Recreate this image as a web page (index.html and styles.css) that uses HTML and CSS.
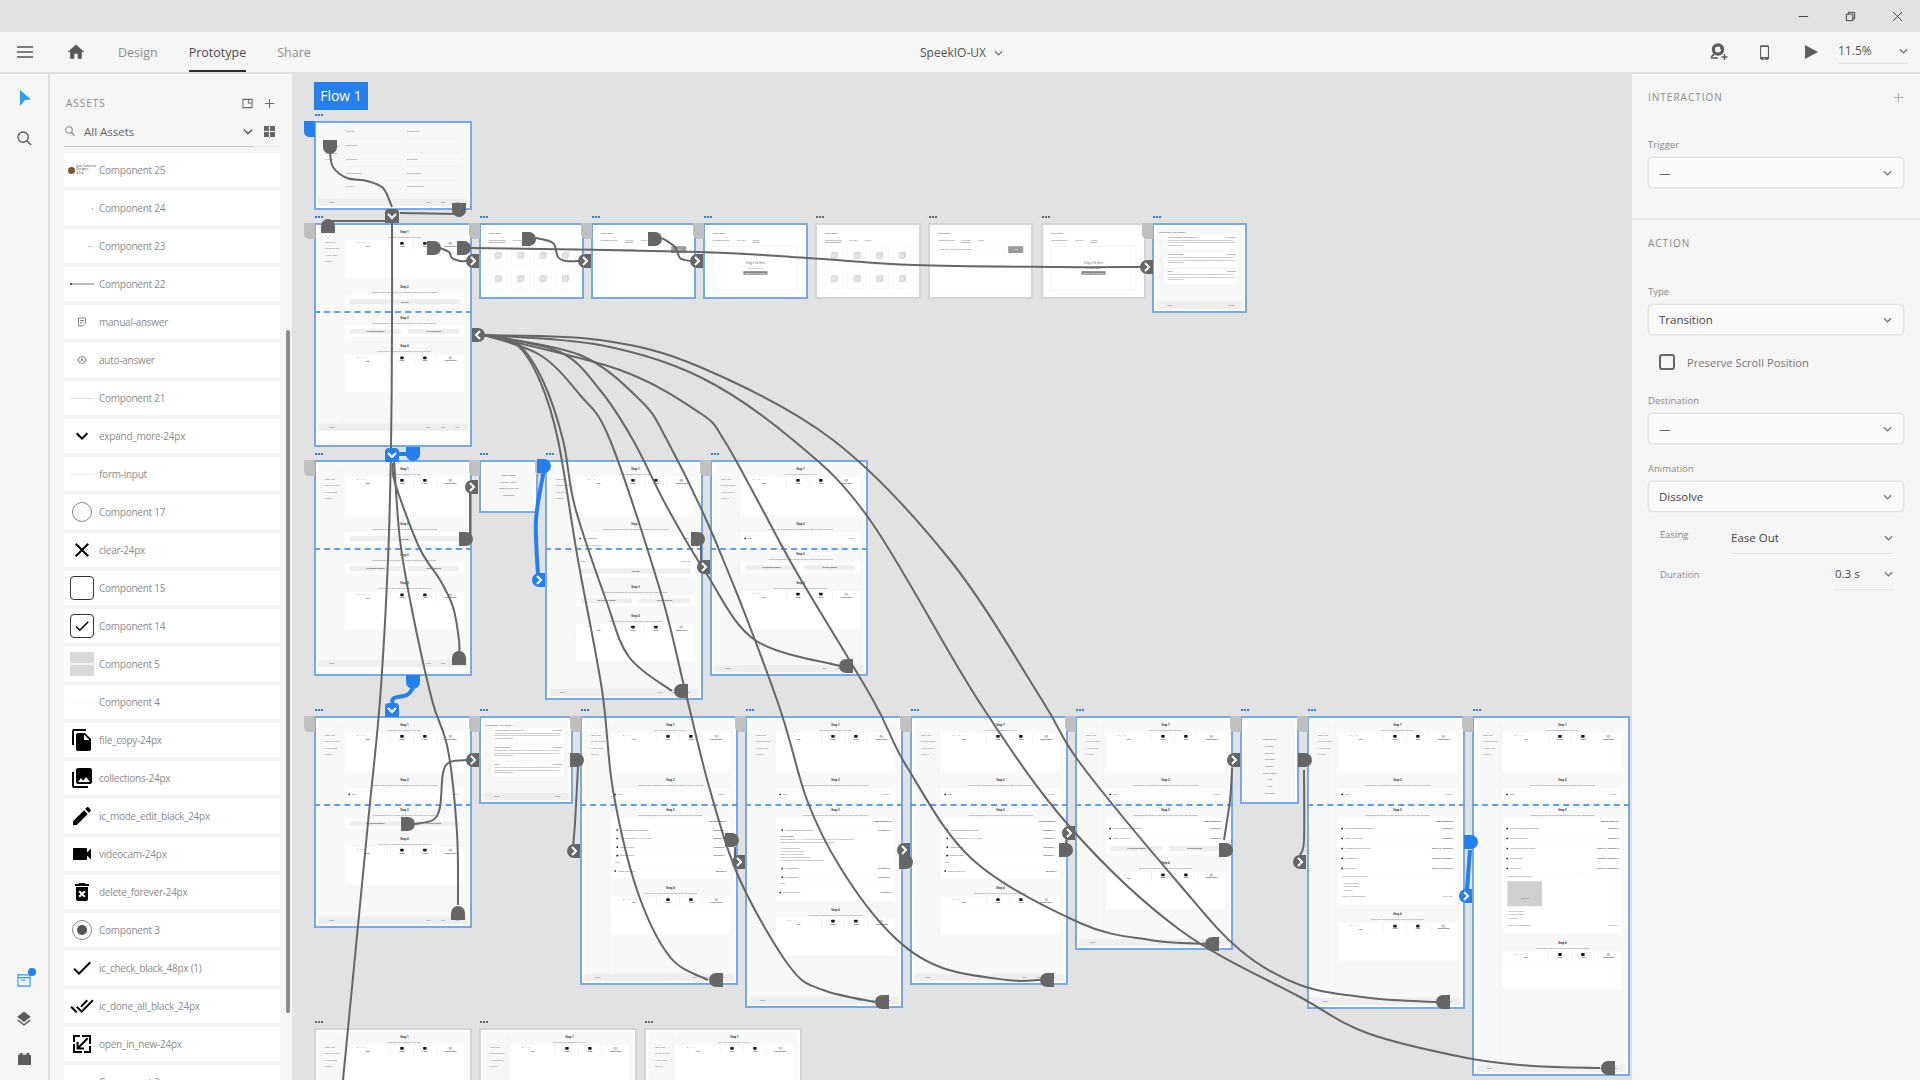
FILE: index.html
```html
<!DOCTYPE html>
<html lang="en">
<head>
    <meta charset="UTF-8">
    <title>SpeekIO-UX</title>
    <link rel="stylesheet" href="styles.css">
</head>
<body>
    <div class="titlebar">
        <svg class="win-ico" viewBox="0 0 12 12"><path d="M1 6h10"/></svg>
        <svg class="win-ico" viewBox="0 0 12 12"><path d="M1.5 3.5h7v7h-7zM3.5 3.5v-2h7v7h-2"/></svg>
        <svg class="win-ico" viewBox="0 0 12 12"><path d="M1 1l10 10M11 1L1 11"/></svg>
    </div>

    <div class="topbar">
        <svg class="burger" viewBox="0 0 16 12"><path d="M0 1h16M0 6h16M0 11h16"/></svg>
        <svg class="home" viewBox="0 0 24 24"><path d="M10 20v-6h4v6h5v-8h3L12 3 2 12h3v8z"/></svg>
        <div class="tabs">
            <div class="tab">Design</div>
            <div class="tab active">Prototype</div>
            <div class="tab">Share</div>
        </div>
        <div class="doc-title">SpeekIO-UX <svg class="chev" viewBox="0 0 10 6"><path d="M1 1l4 4 4-4"/></svg></div>
        <div class="top-right">
            <svg class="top-ico user" viewBox="0 0 18 18"><circle cx="8" cy="6.500" r="4.600"/><path d="M4.500 11.500C2.500 12 1.500 13.500 1.500 15h6.500M8 2c2 0 3.500 2 3 4.500"/><path d="M14.500 11v6M11.500 14h6"/></svg>
            <svg class="top-ico phone" viewBox="0 0 10 16"><path d="M1.500 0h7A1.500 1.500 0 0 1 10 1.500v13A1.500 1.500 0 0 1 8.500 16h-7A1.500 1.500 0 0 1 0 14.500v-13A1.500 1.500 0 0 1 1.500 0zM1.200 2v11h7.600V2zM5 13.700a.8.8 0 1 0 0 1.600.8.8 0 0 0 0-1.600z" fill-rule="evenodd"/></svg>
            <svg class="top-ico play" viewBox="0 0 13 14"><path d="M0 0l13 7-13 7z"/></svg>
            <div class="zoom-box">11.5% <svg class="chev" viewBox="0 0 10 6"><path d="M1 1l4 4 4-4"/></svg></div>
        </div>
    </div>

    <div class="main">
        <div class="rail">
            <svg class="rail-ico arrow" viewBox="0 0 11 16"><path d="M0 0l11 9.500-6 .5-5 6z"/></svg>
            <svg class="rail-ico search" viewBox="0 0 16 16"><circle cx="6.500" cy="6.500" r="5.500"/><path d="M10.500 10.500L15 15"/></svg>
            <div class="rail-bottom">
                <div class="doc-ico">
                    <svg viewBox="0 0 16 15"><path d="M1 2h13v12H1zM1 5h13M4 7.500h5"/></svg>
                    <span class="doc-dot"></span>
                </div>
                <svg class="rail-ico layers" viewBox="0 0 24 24"><path d="M11.990 18.540l-7.370-5.730L3 14.070l9 7 9-7-1.630-1.270-7.380 5.740zM12 16l7.360-5.730L21 9l-9-7-9 7 1.630 1.270L12 16z"/></svg>
                <svg class="rail-ico plugin" viewBox="0 0 16 14"><path d="M1 3h2V1h3v2h4V1h3v2h2v11H1z"/></svg>
            </div>
        </div>

        <div class="assets">
            <div class="assets-head">
                <span class="panel-title">ASSETS</span>
                <svg class="head-ico" viewBox="0 0 12 12"><path d="M1 1.500h10v9H1zM7 1.500v4h4"/></svg>
                <svg class="head-ico plus-ico" viewBox="0 0 12 12"><path d="M6 1v10M1 6h10"/></svg>
            </div>
            <div class="assets-search">
                <svg class="mag" viewBox="0 0 10 10"><circle cx="4" cy="4" r="3.200"/><path d="M6.500 6.500L9.500 9.500"/></svg>
                <span class="search-text">All Assets</span>
                <svg class="search-chev" viewBox="0 0 12 8"><path d="M1 1.500l5 5 5-5"/></svg>
                <svg class="grid-ico" viewBox="0 0 11 11"><path d="M0 0h5v5H0zM6 0h5v5H6zM0 6h5v5H0zM6 6h5v5H6z"/></svg>
            </div>
            <div class="asset-list">
                <div class="asset"><div class="thumb"><span class="mini-face"></span><span class="mini-text">Jane Cameron<br>Designer<br>4.9 ★</span></div>Component 25</div>
                <div class="asset"><div class="thumb right"><span class="speck"></span></div>Component 24</div>
                <div class="asset"><div class="thumb right"><span class="speck wide"></span></div>Component 23</div>
                <div class="asset"><div class="thumb"><span class="rule thick"></span></div>Component 22</div>
                <div class="asset"><div class="thumb"><svg class="small-ico" viewBox="0 0 10 10"><path d="M1.500 1h7v5l-3 3h-4zM3 3.500h4M3 5.500h2.500"/></svg></div>manual-answer</div>
                <div class="asset"><div class="thumb"><svg class="small-ico" viewBox="0 0 10 10"><circle cx="5" cy="5" r="3.500"/><path d="M3.800 6.500L5 3.500l1.200 3M0 5h1M9 5h1"/></svg></div>auto-answer</div>
                <div class="asset"><div class="thumb"><span class="rule"></span></div>Component 21</div>
                <div class="asset"><div class="thumb"><svg class="mat" viewBox="0 0 24 24"><path d="M16.590 8.590L12 13.170 7.410 8.590 6 10l6 6 6-6z"/></svg></div>expand_more-24px</div>
                <div class="asset"><div class="thumb"><span class="rule faint"></span></div>form-input</div>
                <div class="asset"><div class="thumb"><span class="ring"></span></div>Component 17</div>
                <div class="asset"><div class="thumb"><svg class="mat" viewBox="0 0 24 24"><path d="M19 6.410L17.590 5 12 10.590 6.410 5 5 6.410 10.590 12 5 17.590 6.410 19 12 13.410 17.590 19 19 17.590 13.410 12z"/></svg></div>clear-24px</div>
                <div class="asset"><div class="thumb"><span class="check-box"></span></div>Component 15</div>
                <div class="asset"><div class="thumb"><span class="check-box"><svg class="mat tick" viewBox="0 0 24 24"><path d="M9 16.170L4.830 12l-1.420 1.410L9 19 21 7l-1.410-1.410z"/></svg></span></div>Component 14</div>
                <div class="asset"><div class="thumb"><span class="gray-card"></span></div>Component 5</div>
                <div class="asset"><div class="thumb"><span class="rule ghost"></span></div>Component 4</div>
                <div class="asset"><div class="thumb"><svg class="mat" viewBox="0 0 24 24"><path d="M16 1H4c-1.100 0-2 .9-2 2v14h2V3h12V1zm-1 4l6 6v10c0 1.100-.9 2-2 2H7.990C6.890 23 6 22.100 6 21l.01-14c0-1.100.89-2 1.990-2h7zm-1 7h5.500L14 6.500V12z"/></svg></div>file_copy-24px</div>
                <div class="asset"><div class="thumb"><svg class="mat" viewBox="0 0 24 24"><path d="M22 16V4c0-1.100-.9-2-2-2H8c-1.100 0-2 .9-2 2v12c0 1.100.9 2 2 2h12c1.100 0 2-.9 2-2zm-11-4l2.030 2.710L16 11l4 5H8l3-4zM2 6v14c0 1.100.9 2 2 2h14v-2H4V6H2z"/></svg></div>collections-24px</div>
                <div class="asset"><div class="thumb"><svg class="mat" viewBox="0 0 24 24"><path d="M3 17.250V21h3.750L17.810 9.940l-3.750-3.750L3 17.250zM20.710 7.040c.39-.39.39-1.020 0-1.410l-2.340-2.340c-.39-.39-1.020-.39-1.410 0l-1.830 1.830 3.750 3.750 1.830-1.830z"/></svg></div>ic_mode_edit_black_24px</div>
                <div class="asset"><div class="thumb"><svg class="mat" viewBox="0 0 24 24"><path d="M17 10.500V7c0-.55-.45-1-1-1H4c-.55 0-1 .45-1 1v10c0 .55.45 1 1 1h12c.55 0 1-.45 1-1v-3.500l4 4v-11l-4 4z"/></svg></div>videocam-24px</div>
                <div class="asset"><div class="thumb"><svg class="mat" viewBox="0 0 24 24"><path d="M6 19c0 1.100.9 2 2 2h8c1.100 0 2-.9 2-2V7H6v12zm2.460-7.120l1.410-1.410L12 12.590l2.120-2.120 1.410 1.410L13.410 14l2.120 2.120-1.410 1.410L12 15.410l-2.120 2.120-1.410-1.410L10.590 14l-2.130-2.120zM15.500 4l-1-1h-5l-1 1H5v2h14V4z"/></svg></div>delete_forever-24px</div>
                <div class="asset"><div class="thumb"><span class="ring"><span class="ring-dot"></span></span></div>Component 3</div>
                <div class="asset"><div class="thumb"><svg class="mat" viewBox="0 0 24 24"><path d="M9 16.170L4.830 12l-1.420 1.410L9 19 21 7l-1.410-1.410z"/></svg></div>ic_check_black_48px (1)</div>
                <div class="asset"><div class="thumb"><svg class="mat" viewBox="0 0 24 24"><path d="M18 7l-1.410-1.410-6.340 6.340 1.410 1.410L18 7zm4.240-1.410L11.660 16.170 7.480 12l-1.410 1.410L11.660 19l12-12-1.420-1.410zM.41 13.410L6 19l1.410-1.410L1.830 12 .41 13.410z"/></svg></div>ic_done_all_black_24px</div>
                <div class="asset"><div class="thumb"><svg class="mat" viewBox="0 0 24 24"><path d="M21 3v9h-2V5h-7V3zM3 21v-9h2v7h7v2zM3 3h7v2H5v5H3zM21 21h-7v-2h5v-5h2zM17 5.600l1.400 1.400-8.400 8.400H14v2H6.600v-7.400h2v4.100z"/></svg></div>open_in_new-24px</div>
                <div class="asset"><div class="thumb"></div>Component 2</div>
            </div>
            <div class="scroll-thumb"></div>
        </div>

        <div class="canvas" id="canvas">
            <div class="flow-chip">Flow 1</div>
        </div>

        <div class="props">
            <div class="prop-section first">
                <div class="prop-head"><span class="panel-title">INTERACTION</span><svg class="head-ico faint" viewBox="0 0 12 12"><path d="M6 1v10M1 6h10"/></svg></div>
                <label class="field-label">Trigger</label>
                <div class="select muted">—<svg class="chev" viewBox="0 0 10 6"><path d="M1 1l4 4 4-4"/></svg></div>
            </div>
            <div class="prop-section">
                <div class="prop-head"><span class="panel-title">ACTION</span></div>
                <label class="field-label type">Type</label>
                <div class="select">Transition<svg class="chev" viewBox="0 0 10 6"><path d="M1 1l4 4 4-4"/></svg></div>
                <div class="check-row"><span class="check"></span>Preserve Scroll Position</div>
                <label class="field-label dest">Destination</label>
                <div class="select muted">—<svg class="chev" viewBox="0 0 10 6"><path d="M1 1l4 4 4-4"/></svg></div>
                <label class="field-label anim">Animation</label>
                <div class="select">Dissolve<svg class="chev" viewBox="0 0 10 6"><path d="M1 1l4 4 4-4"/></svg></div>
                <div class="inline-row">
                    <span class="inline-label">Easing</span>
                    <div class="inline-value">Ease Out<svg class="chev" viewBox="0 0 10 6"><path d="M1 1l4 4 4-4"/></svg></div>
                </div>
                <div class="inline-row second">
                    <span class="inline-label">Duration</span>
                    <div class="inline-value short">0.3 s<svg class="chev" viewBox="0 0 10 6"><path d="M1 1l4 4 4-4"/></svg></div>
                </div>
            </div>
        </div>
    </div>
    <script src="canvas.js"></script>
</body>
</html>
```

FILE: styles.css
```css
* {
    margin: 0;
    padding: 0;
    box-sizing: border-box;
}
body {
    width: 1920px;
    height: 1080px;
    overflow: hidden;
    background-color: #e2e2e2;
    font-family: "Open Sans", "Noto Sans", sans-serif;
    color: #555;
    display: flex;
    flex-direction: column;
}

/* window title bar */
.titlebar {
    height: 32px;
    background-color: #e2e2e2;
    display: flex;
    justify-content: flex-end;
    align-items: center;
    gap: 36px;
    padding-right: 17px;
}
.win-ico {
    width: 11px;
    height: 11px;
    fill: none;
    stroke: #333;
    stroke-width: 1;
}

/* app bar */
.topbar {
    height: 42px;
    background-color: #f5f5f5;
    border-bottom: 2px solid #e0e0e0;
    display: flex;
    align-items: center;
    position: relative;
}
.burger {
    width: 16px;
    height: 12px;
    margin-left: 17px;
    fill: none;
    stroke: #555;
    stroke-width: 1.6;
}
.home {
    width: 20px;
    height: 20px;
    margin-left: 33px;
    fill: #595959;
}
.tabs {
    display: flex;
    gap: 31px;
    margin-left: 32px;
    height: 40px;
}
.tab {
    font-size: 12.5px;
    line-height: 41px;
    color: #8e8e8e;
}
.tab.active {
    color: #4b4b4b;
    border-bottom: 2px solid #2c2c2c;
}
.doc-title {
    position: absolute;
    left: 920px;
    top: 0;
    line-height: 41px;
    font-size: 12px;
    color: #555;
}
.chev {
    width: 9px;
    height: 6px;
    fill: none;
    stroke: #777;
    stroke-width: 1.4;
}
.doc-title .chev {
    margin-left: 5px;
    vertical-align: 1px;
}
.top-right {
    margin-left: auto;
    display: flex;
    align-items: center;
    height: 40px;
    padding-right: 12px;
}
.top-ico {
    width: 17px;
    height: 16px;
    fill: #5c5c5c;
}
.top-ico.user {
    width: 18px;
    height: 18px;
    fill: none;
    stroke: #5c5c5c;
    stroke-width: 1.5;
}
.top-ico.user circle {
    stroke-width: 3.2;
}
.top-ico.phone {
    width: 9px;
    margin-left: 32px;
    height: 15px;
}
.top-ico.play {
    width: 13px;
    height: 14px;
    margin-left: 36px;
}
.zoom-box {
    width: 70px;
    margin-left: 20px;
    height: 23px;
    border-bottom: 1px solid #e0e0e0;
    font-size: 12px;
    line-height: 18px;
    display: flex;
    justify-content: space-between;
    align-items: center;
    padding-bottom: 2px;
}

.main {
    flex: 1;
    display: flex;
    min-height: 0;
}

/* tools rail */
.rail {
    width: 50px;
    background-color: #f5f5f5;
    border-right: 2px solid #e0e0e0;
    display: flex;
    flex-direction: column;
    align-items: center;
    padding-top: 16px;
}
.rail-ico {
    display: block;
}
.rail-ico.arrow {
    width: 11px;
    height: 16px;
    fill: #2d9bf0;
    margin-left: 2px;
}
.rail-ico.search {
    width: 15px;
    height: 15px;
    margin-top: 25px;
    fill: none;
    stroke: #5c5c5c;
    stroke-width: 1.5;
}
.rail-bottom {
    margin-top: auto;
    padding-bottom: 15px;
    display: flex;
    flex-direction: column;
    align-items: center;
}
.doc-ico {
    width: 15px;
    height: 14px;
    position: relative;
}
.doc-ico svg {
    display: block;
    width: 15px;
    height: 14px;
    fill: none;
    stroke: #2d9bf0;
    stroke-width: 1.2;
}
.doc-dot {
    position: absolute;
    right: -4px;
    top: -5px;
    width: 8px;
    height: 8px;
    border-radius: 50%;
    background-color: #2680eb;
}
.rail-ico.layers {
    width: 18px;
    height: 18px;
    margin-top: 23px;
    fill: #5c5c5c;
}
.rail-ico.plugin {
    width: 15px;
    height: 13px;
    margin-top: 24px;
    fill: #5c5c5c;
}

/* assets panel */
.assets {
    width: 242px;
    background-color: #f5f5f5;
    padding: 0 12px 0 14px;
    position: relative;
    overflow: hidden;
}
.panel-title {
    font-size: 10px;
    letter-spacing: 1px;
    color: #8a8a8a;
}
.assets-head {
    height: 30px;
    margin-top: 14px;
    padding-left: 2px;
    display: flex;
    align-items: center;
}
.head-ico {
    width: 11px;
    height: 11px;
    fill: none;
    stroke: #6a6a6a;
    stroke-width: 1.1;
    margin-left: 11px;
}
.assets-head .head-ico:nth-child(2) {
    margin-left: auto;
}
.assets-head .plus-ico {
    margin-right: 5px;
    stroke: #6a6a6a;
}
.head-ico.faint {
    stroke: #aaa;
    margin-left: auto;
    margin-right: -1px;
}
.assets-search {
    height: 28px;
    margin-top: 1px;
    border-bottom: 1px solid #e8e8e8;
    display: flex;
    align-items: center;
    padding: 0 5px 3px 1px;
    position: relative;
}
.assets-search::after {
    content: "";
    position: absolute;
    left: 0;
    bottom: -1px;
    width: 189px;
    height: 1px;
    background-color: #c4c4c4;
}
.mag {
    width: 10px;
    height: 10px;
    fill: none;
    stroke: #888;
    stroke-width: 1.1;
}
.search-text {
    font-size: 11.5px;
    color: #666;
    margin-left: 9px;
}
.search-chev {
    width: 10px;
    height: 7px;
    margin-left: auto;
    fill: none;
    stroke: #555;
    stroke-width: 1.6;
}
.grid-ico {
    width: 11px;
    height: 11px;
    margin-left: 11px;
    fill: #666;
}
.asset-list {
    margin-top: 6px;
    display: flex;
    flex-direction: column;
    gap: 4px;
}
.asset {
    height: 34px;
    background-color: #fff;
    border-radius: 2px;
    display: flex;
    align-items: center;
    padding-left: 6px;
    font-size: 10px;
    letter-spacing: -.25px;
    color: #8b8b8b;
    flex-shrink: 0;
}
.thumb {
    width: 24px;
    height: 24px;
    margin-right: 5px;
    display: flex;
    align-items: center;
    justify-content: center;
    position: relative;
}
.thumb.right {
    justify-content: flex-end;
}
.mat {
    width: 24px;
    height: 24px;
    fill: #000;
}
.small-ico {
    width: 10px;
    height: 10px;
    fill: none;
    stroke: #666;
    stroke-width: .8;
}
.mini-face {
    width: 7px;
    height: 7px;
    border-radius: 50%;
    background-color: #7d5232;
    flex-shrink: 0;
}
.mini-text {
    font-size: 3px;
    line-height: 3.4px;
    letter-spacing: 0;
    color: #333;
    margin-left: 1px;
    white-space: nowrap;
}
.speck {
    width: 1px;
    height: 1px;
    background-color: #999;
    margin-right: 1px;
}
.speck.wide {
    width: 5px;
    background-color: #ccc;
}
.rule {
    width: 24px;
    height: 1px;
    background-color: #ddd;
}
.rule.thick {
    height: 2px;
    background-color: #bbb;
    border-left: 2px solid #555;
}
.rule.faint {
    background-color: #eee;
}
.rule.ghost {
    background-color: #f6f6f6;
}
.ring {
    width: 20px;
    height: 20px;
    border: 1px solid #888;
    border-radius: 50%;
    display: flex;
    align-items: center;
    justify-content: center;
}
.ring-dot {
    width: 10px;
    height: 10px;
    border-radius: 50%;
    background-color: #555;
}
.check-box {
    width: 24px;
    height: 24px;
    border: 1px solid #333;
    border-radius: 4px;
    display: flex;
    align-items: center;
    justify-content: center;
}
.tick {
    width: 18px;
    height: 18px;
}
.gray-card {
    width: 24px;
    height: 24px;
    background: linear-gradient(#d9d9d9 11px, #f2f2f2 11px, #f2f2f2 13px, #d9d9d9 13px);
}
.scroll-thumb {
    position: absolute;
    left: 236px;
    top: 256px;
    width: 4px;
    height: 683px;
    border-radius: 2px;
    background-color: #8c8c8c;
}

/* canvas */
.canvas {
    width: 1340px;
    position: relative;
    overflow: hidden;
    background-color: #e2e2e2;
}
.flow-chip {
    position: absolute;
    left: 22px;
    top: 8px;
    width: 54px;
    height: 28px;
    background-color: #2680eb;
    color: #fff;
    font-size: 14px;
    line-height: 28px;
    text-align: center;
}
.wires {
    position: absolute;
    left: 0;
    top: 0;
    width: 1340px;
    height: 1006px;
}
.wire {
    fill: none;
    stroke: #666;
    stroke-width: 2;
}
.wire.blue {
    stroke: #2680eb;
    stroke-width: 4;
}
.knob {
    fill: #666;
}
.knob.blue {
    fill: #2680eb;
}
.knob-arrow {
    fill: none;
    stroke: #fff;
    stroke-width: 2;
}

/* artboards, drawn at full size and scaled down by .page */
.board {
    position: absolute;
    background-color: #fff;
    border: 2px solid #74a9ec;
}
.board.idle {
    border-color: #d4d4d4;
}
.board-dots {
    position: absolute;
    left: -1px;
    top: -9px;
    display: flex;
    gap: 1px;
}
.board-dots i {
    width: 2px;
    height: 2px;
    background-color: #2680eb;
}
.board.idle .board-dots i {
    background-color: #666;
}
.board-tab {
    position: absolute;
    left: -12px;
    top: -2px;
    width: 11px;
    height: 16px;
    background-color: #bfbfbf;
    border-radius: 0 0 0 5px;
}
.board-tab.blue {
    background-color: #2680eb;
}
.fold {
    position: absolute;
    left: -2px;
    right: -2px;
    height: 0;
    border-top: 2px dashed #5a9ff0;
}
.page {
    transform-origin: 0 0;
    transform: scale(.1157);
    overflow: hidden;
    background-color: #fff;
    padding: 20px;
    display: flex;
    flex-direction: column;
    font-size: 14px;
    color: #555;
}
.page-body {
    flex: 1;
    display: flex;
    min-height: 0;
    background-color: #f8f8f8;
    overflow: hidden;
}
.side-nav {
    width: 210px;
    border-right: 3px solid #efefef;
    padding: 118px 0 0 50px;
    flex-shrink: 0;
    font-size: 18px;
    color: #666;
}
.side-nav p {
    height: 52px;
}
.side-nav p:nth-child(2) {
    height: 60px;
}
.steps {
    flex: 1;
    padding: 23px 32px 0 20px;
    min-width: 0;
}
.step {
    margin-bottom: 66px;
}
.step h4 {
    font-size: 24px;
    line-height: 30px;
    text-align: center;
    color: #333;
}
.step .sub {
    font-size: 16px;
    line-height: 30px;
    height: 41px;
    margin-top: 16px;
    text-align: center;
    color: #666;
    white-space: nowrap;
}
.tools {
    display: flex;
    gap: 6px;
    height: 80px;
    background-color: #eee;
    font-size: 14px;
    color: #333;
    text-align: center;
}
.cell {
    flex: 196;
    background-color: #fff;
    padding-top: 16px;
    line-height: 16px;
    font-weight: 700;
}
.cell.wide {
    flex: 398;
    letter-spacing: 8px;
    font-weight: 400;
    white-space: nowrap;
    overflow: hidden;
}
.cell.wide .lbl {
    letter-spacing: 0;
    font-weight: 700;
    margin-top: 16px;
}
.cell.last {
    flex: 240;
}
.ico {
    display: block;
    width: 30px;
    height: 24px;
    margin: 0 auto 5px;
    background-color: #1a1a1a;
    border-radius: 4px;
}
.ico.pale {
    opacity: .25;
}
.edit-box {
    height: 245px;
    background-color: #fff;
}
.box {
    background-color: #fff;
    padding: 14px 12px;
    border-radius: 4px;
}
.bar {
    height: 46px;
    margin: 19px 26px;
    background-color: #eee;
    text-align: center;
    line-height: 46px;
    font-size: 15px;
    font-weight: 700;
    color: #444;
}
.btns {
    display: flex;
    justify-content: space-around;
    padding: 12px 0;
}
.btns div {
    width: 440px;
    height: 42px;
    line-height: 42px;
    background-color: #eee;
    text-align: center;
    font-size: 14px;
    font-weight: 700;
    color: #444;
}
.answer {
    height: 50px;
    margin: 14px 0;
    display: flex;
    align-items: center;
    gap: 14px;
    border: 2px solid #f2f2f2;
    padding: 0 16px;
    font-size: 14px;
    color: #333;
}
.answer .right {
    margin-left: auto;
}
.bullet {
    width: 14px;
    height: 14px;
    border-radius: 3px;
    background-color: #222;
    flex-shrink: 0;
}
.total {
    text-align: right;
    font-size: 15px;
    font-weight: 700;
    color: #333;
    padding: 4px 20px 18px 0;
}
.q-row {
    height: 66px;
    margin-bottom: 20px;
    border: 2px solid #f4f4f4;
    display: flex;
    align-items: center;
    gap: 14px;
    padding: 0 16px;
    font-size: 14px;
    color: #444;
    white-space: nowrap;
}
.q-row .right {
    margin-left: auto;
    font-weight: 700;
}
.q-group {
    border: 2px solid #f4f4f4;
    padding: 10px 16px;
    margin-bottom: 20px;
    font-size: 13px;
    color: #555;
    line-height: 26px;
}
.q-group p {
    white-space: nowrap;
    overflow: hidden;
}
.q-group .q-row {
    margin-bottom: 8px;
}
.q-form {
    border: 2px solid #f4f4f4;
    margin: -20px 0 20px;
    padding: 20px 24px;
    font-size: 14px;
    line-height: 30px;
    color: #555;
}
.q-form .q-input {
    width: 620px;
    border-bottom: 2px solid #eee;
    margin-bottom: 24px;
}
.q-foot {
    display: flex;
    justify-content: space-between;
    margin-top: 30px;
}
.image-drop {
    width: 300px;
    height: 216px;
    background-color: #cfcfcf;
    margin-bottom: 30px;
    text-align: center;
    padding-top: 130px;
    font-size: 14px;
}
.page-foot {
    height: 64px;
    background-color: #eee;
    display: flex;
    align-items: center;
    padding: 0 70px 0 90px;
    gap: 90px;
    font-size: 16px;
    color: #555;
    flex-shrink: 0;
}
.page-foot span:first-child {
    margin-right: auto;
}

.form-wrap {
    flex: 1;
    padding: 44px 60px 0 30px;
    display: grid;
    grid-template-columns: 1fr 1fr;
    column-gap: 60px;
    align-content: start;
    font-size: 15px;
}
.form-field {
    height: 119px;
}
.form-field p {
    height: 74px;
    border-bottom: 2px solid #e4e4e4;
}

.lib {
    flex: 1;
    background-color: #fff;
    padding: 38px 44px;
    display: flex;
    flex-direction: column;
    border: 3px solid #f2f2f2;
    font-size: 17px;
}
.lib h5 {
    font-size: 18px;
    font-weight: 400;
    color: #333;
    margin-bottom: 34px;
}
.lib-tabs {
    display: flex;
    gap: 64px;
    color: #555;
    margin-bottom: 30px;
}
.lib-tabs span {
    padding-bottom: 6px;
    border-bottom: 5px solid transparent;
}
.lib-tabs .on {
    border-bottom-color: #888;
}
.tile-grid {
    display: grid;
    grid-template-columns: repeat(4, 1fr);
    gap: 36px;
}
.tile {
    height: 166px;
    border: 4px solid #f0f0f0;
    border-radius: 12px;
    display: flex;
    align-items: center;
    justify-content: center;
}
.tile i {
    width: 50px;
    height: 50px;
    background-color: #e4e4e4;
    border: 4px solid #ccc;
    box-shadow: 10px -10px 0 #ddd;
}
.link-row {
    display: flex;
    gap: 34px;
}
.link-row div {
    flex: 1;
    background-color: #fff;
    border: 2px solid #eee;
    height: 60px;
    line-height: 56px;
    padding-left: 10px;
}
.link-row b {
    width: 130px;
    height: 60px;
    line-height: 60px;
    background-color: #999;
    color: #fff;
    text-align: center;
}
.drop {
    flex: 1;
    border: 3px dashed #cfcfcf;
    text-align: center;
    padding-top: 130px;
    background-color: #fff;
}
.drop .big {
    font-size: 22px;
    margin-bottom: 18px;
}
.drop b {
    display: inline-block;
    margin-top: 12px;
    padding: 4px 14px;
    background-color: #888;
    color: #fff;
    font-weight: 400;
}

.options {
    flex: 1;
    background-color: #f8f8f8;
    border: 3px solid #f2f2f2;
    text-align: center;
    font-size: 17px;
    padding-top: 80px;
    color: #444;
}
.options p {
    height: 58px;
}
.options.dense {
    padding-top: 150px;
}

.cat-body {
    flex: 1;
    background-color: #f8f8f8;
    padding: 30px 40px 0 22px;
    font-size: 14px;
    min-height: 0;
}
.cat-body h5 {
    font-size: 17px;
    font-weight: 400;
    color: #333;
    margin-bottom: 12px;
}
.cat {
    display: flex;
    gap: 30px;
    align-items: center;
    margin-bottom: 20px;
}
.cat > i {
    width: 24px;
    height: 24px;
    border: 3px solid #ddd;
    flex-shrink: 0;
    border-radius: 4px;
}
.cat div {
    flex: 1;
    background-color: #fff;
    padding: 14px 20px;
    min-height: 128px;
    line-height: 20px;
    font-size: 12px;
    color: #666;
}
.cat h6 {
    display: flex;
    justify-content: space-between;
    font-size: 14px;
    font-weight: 400;
    color: #333;
    margin-bottom: 6px;
}
.page-foot.two {
    gap: 0;
    justify-content: space-between;
}

/* properties panel */
.props {
    width: 288px;
    background-color: #f5f5f5;
}
.prop-section {
    padding: 15px 16px 0 16px;
    border-top: 2px solid #e4e4e4;
}
.prop-section.first {
    border-top: 0;
    height: 144px;
}
.prop-head {
    height: 16px;
    display: flex;
    align-items: center;
    justify-content: space-between;
    padding-right: 1px;
}
.field-label {
    display: block;
    font-size: 9.5px;
    color: #8a8a8a;
    margin-top: 32px;
    height: 15px;
    line-height: 15px;
}
.field-label.type {
    margin-top: 33px;
}
.field-label.dest {
    margin-top: 23px;
}
.field-label.anim {
    margin-top: 17px;
}
.select {
    height: 31px;
    margin-top: 5px;
    background-color: #fafafa;
    border: 1px solid #e2e2e2;
    box-shadow: 0 0 0 .5px #e8e8e8;
    border-radius: 4px;
    padding: 0 10px;
    display: flex;
    align-items: center;
    justify-content: space-between;
    font-size: 11.5px;
    color: #444;
}
.select.muted {
    color: #666;
}
.select .chev {
    margin-right: 1px;
}
.check-row {
    display: flex;
    align-items: center;
    margin: 19px 0 0 11px;
    height: 16px;
    font-size: 11.2px;
    color: #777;
}
.check {
    width: 16px;
    height: 16px;
    border: 2px solid #666;
    border-radius: 3px;
    margin-right: 12px;
}
.inline-row {
    margin-top: 12px;
    padding-left: 12px;
    height: 30px;
    display: flex;
    justify-content: space-between;
    font-size: 9.5px;
    color: #8a8a8a;
    line-height: 22px;
}
.inline-row.second {
    margin-top: 6px;
    line-height: 30px;
}
.inline-value {
    width: 162px;
    border-bottom: 1px solid #e2e2e2;
    display: flex;
    justify-content: space-between;
    align-items: center;
    font-size: 11.5px;
    color: #444;
    height: 30px;
    padding-bottom: 2px;
    margin-right: 11px;
}
.inline-value.short {
    width: 58px;
}
```

FILE: canvas.js
```js
// artboards and prototype wires on the canvas, all coordinates are screen px
var S = 0.1157;
var OX = 292;
var OY = 74;
var canvas = document.getElementById('canvas');

function nav() {
    return '<div class="side-nav"><p>• Basic Info</p><p>• Screen Builder</p><p>• Hiring Team</p><p>• Finalize</p></div>';
}
function foot() {
    return '<div class="page-foot"><span>Cancel</span><span>Save</span><span>Back</span><span>Next</span></div>';
}
function step(n, sub, body) {
    return '<div class="step"><h4>Step ' + n + '</h4><p class="sub">' + sub + '</p>' + body + '</div>';
}
function editor() {
    return '<div class="tools"><div class="cell wide">B I U ≡ ≡ ≡ ≡<p class="lbl">Text</p></div>' +
        '<div class="cell"><i class="ico"></i>Photo</div><div class="cell"><i class="ico"></i>Video</div>' +
        '<div class="cell last"><i class="ico pale"></i>Upload Setting</div></div><div class="edit-box"></div>';
}
function bar() {
    return '<div class="box"><div class="bar">Add Item</div></div>';
}
function btns() {
    return '<div class="box"><div class="btns"><div>Add Question Category</div><div>Add New Question</div></div></div>';
}
function answer() {
    return '<div class="box"><div class="answer"><span class="bullet"></span>Video<span class="right">⏱ 5 min</span><span>⤢</span></div></div>';
}
function answerForm() {
    return '<div class="box"><div class="answer"><span class="bullet"></span>Video Answer Type<span class="right">⏱ 5 min</span><span>⤢</span></div>' +
        '<div class="q-form"><p class="q-input">Add your own question in this</p><br><br><div class="q-foot"><span>▪ Delete</span><span>Cancel &nbsp; Save</span></div></div>' +
        '<div class="bar">Add Item</div></div>';
}
function qRow(text, right) {
    return '<div class="q-row"><span class="bullet"></span>' + text + '<span class="right">' + (right || 'Weightage 10') + '</span></div>';
}
function qList() {
    return '<div class="box"><p class="total">Total Weightage 100</p>' +
        '<div class="q-group">' + qRow('Analytical Reasoning (Basic Questions)') +
        qRow('Write what decision at 7, 9, 5, 16, 5, 7 and 5') + qRow('Unscramble Today') + qRow('Unscramble Today') +
        '<p>▪ Delete</p></div>' + qRow('Category 2 (Scale 3 bits)') + '</div>';
}
function qOpen() {
    return '<div class="box"><p class="total">Total Weightage 100</p>' +
        '<div class="q-group">' + qRow('Analytical Reasoning (Basic Questions)') +
        '<p><b>Analytic Reasoning</b></p><p>These are common of 7, 9, 5, 16, 5, 7 and 5 of the next number, how they are placed in the set of the series</p>' +
        '<p>the number in the series of the next question, and the order is what is missing</p><br>' +
        '<p>1. It is a simple, fast and used</p><p>2. It is used and used in the project</p><p>3. Each of 7 will run a set of series</p><p>4. Each of 7 of 5 is a series and number of it</p><p>5. It is a series where a number of it is placed in the set of order</p><br>' +
        qRow('Unscramble Today') + qRow('Unscramble Today') + '<p>▪ Delete</p></div>' + qRow('Category 2 (Scale 3 bits)') + '</div>';
}
function qEdit(withImage) {
    return '<div class="box"><p class="total">Total Weightage 100</p>' +
        qRow('Analytical Reasoning (Basic Questions)') + qRow('Category 2 (Scale 3 bits)') +
        qRow('Write what decision in next series', '▾ Select Any &nbsp; Weightage 10') + qRow('What comes next', '▾ Explained &nbsp; Weightage 10') +
        qRow('Multiple choice', '▾ Select Any &nbsp; Weightage 10') +
        '<div class="q-form"><p class="q-input">Please enter your question in this</p>' +
        (withImage ? '<div class="image-drop">Add Media</div>' : '') +
        '<p>▫ Add a choice answer</p><p>▫ Add a choice answer</p><p>+ Add answer</p>' +
        '<div class="q-foot"><span>▪ Delete &nbsp; ▪ Duplicate Question</span><span>Cancel &nbsp; Save</span></div></div></div>';
}
function qShort() {
    return '<div class="box"><p class="total">Total Weightage 100</p>' + qRow('Analytical Reasoning (Basic Questions)') +
        qRow('Category 2 (Scale 3 bits)') + '<div class="btns"><div>Add Question Category</div><div>Add New Question</div></div></div>';
}

var SUB1 = 'Give users basic Emergency Role here';
var SUB2 = 'Candidate has to proceed with the knowledge of basic to take an interaction';
var SUB3 = 'Screening Questions for the role and categorize into create own questions';
var SUB4 = 'Rating Scale for Screen and rating scale to hire the candidates';

function stepsPage(mid2, mid3) {
    return '<div class="page-body">' + nav() + '<div class="steps">' +
        step(1, SUB1, editor()) + step(2, SUB2, mid2) + step(3, SUB3, mid3) + step(4, SUB4, editor()) +
        '</div></div>' + foot();
}
function firstOnly() {
    return '<div class="page-body">' + nav() + '<div class="steps">' + step(1, SUB1, editor()) + '</div></div>';
}
function formPage() {
    var names = ['Job Name', 'Job Description', 'Job Reference', '', 'Job Language', 'Job Schedule', 'Required Education', 'Preferred Degree', 'Job Family', 'Required Experience'];
    var html = '';
    for (var i = 0; i < names.length; i++) {
        html += '<div class="form-field"><p>' + names[i] + '</p></div>';
    }
    return '<div class="page-body">' + nav() + '<div class="form-wrap">' + html + '</div></div>' + foot();
}
function libPage(active, body) {
    var tabs = ['Suggested Images', 'Your Info', 'Upload'];
    var html = '';
    for (var i = 0; i < 3; i++) {
        html += '<span' + (i == active ? ' class="on"' : '') + '>' + tabs[i] + '</span>';
    }
    return '<div class="lib"><h5>Select Image</h5><div class="lib-tabs">' + html + '</div>' + body + '</div>';
}
function tiles() {
    var html = '';
    for (var i = 0; i < 8; i++) {
        html += '<div class="tile"><i></i></div>';
    }
    return libPage(0, '<div class="tile-grid">' + html + '</div>');
}
function linkTab() {
    return libPage(1, '<div class="link-row"><div>Paste your link here and load image</div><b>Add</b></div>');
}
function dropTab() {
    return libPage(2, '<div class="drop"><p class="big">Drag a File Here</p><p>or click to select</p><b>Browse Files to Upload</b></div>');
}
function optionsPage(list, dense) {
    var html = '';
    for (var i = 0; i < list.length; i++) {
        html += '<p>' + list[i] + '</p>';
    }
    return '<div class="options' + (dense ? ' dense' : '') + '">' + html + '</div>';
}
function catPage() {
    var txt = 'Lorem ipsum dolor sit amet consectetur adipiscing elit sed do eiusmod tempor incididunt ut labore et dolore magna aliqua enim ad minim veniam quis nostrud exercitation ullamco laboris nisi ut aliquip ex ea commodo consequat duis';
    var names = ['Analytical Reasoning, Maple Questions', 'Project Management', 'English'];
    var html = '';
    for (var i = 0; i < 3; i++) {
        html += '<div class="cat"><i></i><div><h6><span>' + names[i] + '</span><span>5 Questions</span></h6>' + txt + '</div></div>';
    }
    return '<div class="cat-body"><h5>Please Select Hiring Category</h5>' + html + '</div>' +
        '<div class="page-foot two"><span>Cancel</span><span>Submit</span></div>';
}

var OPTS = ['Choose Option', 'Text Entry &amp; Code', 'Choose an Input Type', 'Video answer'];
var OPTS2 = ['Choose Option', 'Text Entry', 'Code Entry', 'Whiteboard', 'Diagram', 'Multiple Choice', 'Video', 'Audio', 'File Upload'];

// x, y, w, h, html, tab, bottom white space, has fold
var boards = [
    { x: 314, y: 121, w: 158, h: 89, html: formPage(), tab: 'blue' },
    { x: 314, y: 223, w: 158, h: 224, html: stepsPage(bar(), btns()), tab: 1, fold: 1, pad: 14 },
    { x: 479, y: 223, w: 105, h: 76, html: tiles(), tab: 1 },
    { x: 591, y: 223, w: 105, h: 76, html: linkTab(), tab: 1 },
    { x: 703, y: 223, w: 105, h: 76, html: dropTab(), tab: 1 },
    { x: 815, y: 223, w: 106, h: 76, html: tiles(), idle: 1 },
    { x: 928, y: 223, w: 105, h: 76, html: linkTab(), idle: 1 },
    { x: 1041, y: 223, w: 105, h: 76, html: dropTab(), idle: 1 },
    { x: 1152, y: 223, w: 95, h: 90, html: catPage(), tab: 1 },
    { x: 314, y: 460, w: 158, h: 216, html: stepsPage(bar(), btns()), tab: 1, fold: 1, pad: 7 },
    { x: 479, y: 460, w: 59, h: 53, html: optionsPage(OPTS), tab: 1 },
    { x: 545, y: 460, w: 158, h: 240, html: stepsPage(answerForm(), btns()), tab: 1, fold: 1 },
    { x: 710, y: 460, w: 158, h: 216, html: stepsPage(answer(), btns()), tab: 1, fold: 1 },
    { x: 314, y: 716, w: 158, h: 212, html: stepsPage(answer(), btns()), tab: 1, fold: 1 },
    { x: 479, y: 716, w: 94, h: 88, html: catPage(), tab: 1 },
    { x: 580, y: 716, w: 158, h: 269, html: stepsPage(answer(), qList()), tab: 1, fold: 1 },
    { x: 745, y: 716, w: 158, h: 292, html: stepsPage(answer(), qOpen()), tab: 1, fold: 1 },
    { x: 910, y: 716, w: 158, h: 269, html: stepsPage(answer(), qList()), tab: 1, fold: 1 },
    { x: 1075, y: 716, w: 158, h: 234, html: stepsPage(answer(), qShort()), tab: 1, fold: 1 },
    { x: 1240, y: 716, w: 59, h: 88, html: optionsPage(OPTS2, 1), tab: 1 },
    { x: 1307, y: 716, w: 158, h: 293, html: stepsPage(answer(), qEdit()), tab: 1, fold: 1 },
    { x: 1472, y: 716, w: 158, h: 360, html: stepsPage(answer(), qEdit(1)), tab: 1, fold: 1 },
    { x: 314, y: 1028, w: 158, h: 300, html: firstOnly(), idle: 1 },
    { x: 479, y: 1028, w: 158, h: 300, html: firstOnly(), idle: 1 },
    { x: 644, y: 1028, w: 158, h: 300, html: firstOnly(), idle: 1 }
];

boards.forEach(function(b) {
    var el = document.createElement('div');
    el.className = 'board' + (b.idle ? ' idle' : '');
    el.style.left = (b.x - OX) + 'px';
    el.style.top = (b.y - OY) + 'px';
    el.style.width = b.w + 'px';
    el.style.height = b.h + 'px';
    var pw = (b.w - 4) / S;
    var ph = (b.h - 4) / S;
    var html = '<div class="page" style="width:' + pw + 'px;height:' + ph + 'px;padding-bottom:' + ((b.pad || 2) / S) + 'px">' + b.html + '</div>';
    html += '<div class="board-dots"><i></i><i></i><i></i></div>';
    if (b.tab) {
        html += '<div class="board-tab' + (b.tab == 'blue' ? ' blue' : '') + '"></div>';
    }
    if (b.fold) {
        html += '<div class="fold" style="top:' + 86 + 'px"></div>';
    }
    el.innerHTML = html;
    canvas.appendChild(el);
});

// wires go through measured points, smoothed with a catmull-rom curve
var FAN = [484, 335];
var wires = [
    [[330, 152], [333, 167], [347, 178], [367, 181], [383, 188], [392, 207]],
    [[458, 214], [400, 213]],
    [[332, 221], [386, 221]],
    [[392, 222], [392, 330], [391, 447], [388, 560], [380, 700], [367, 833], [343, 1080]],
    [[394, 460], [400, 540], [412, 610], [432, 700], [448, 750], [457, 833], [458, 905]],
    [[393, 463], [395, 483], [419, 547], [440, 580], [453, 607], [459, 640], [459, 655]],
    [[440, 248], [449, 252], [452, 258], [460, 261], [468, 261]],
    [[471, 248], [700, 252], [807, 258], [914, 265], [1057, 267], [1143, 267]],
    [[536, 238], [553, 243], [558, 257], [566, 261], [580, 261]],
    [[662, 238], [675, 247], [680, 258], [690, 261]],
    [[470, 535], [470, 490]],
    [[701, 545], [701, 565]],
    [[415, 824], [433, 820], [440, 807], [443, 773], [450, 762], [467, 760]],
    [[578, 767], [575, 823], [573, 847]],
    [[735, 847], [735, 857]],
    [[1066, 843], [1067, 835]],
    [[1224, 840], [1230, 800], [1232, 768]],
    [[1304, 770], [1304, 840], [1300, 855]],
    [FAN, [517, 345], [540, 381], [558, 440], [578, 560], [602, 690], [613, 790], [637, 890], [670, 957], [708, 980]],
    [FAN, [517, 343], [543, 381], [563, 440], [575, 507], [606, 600], [629, 657], [672, 691]],
    [FAN, [540, 355], [580, 395], [610, 440], [660, 590], [685, 690], [710, 790], [740, 880], [790, 967], [823, 990], [875, 1002]],
    [FAN, [560, 352], [600, 390], [633, 440], [667, 507], [706, 573], [755, 640], [840, 666]],
    [FAN, [580, 355], [640, 400], [667, 440], [715, 540], [777, 700], [807, 800], [840, 867], [890, 933], [940, 967], [1007, 980], [1040, 980]],
    [FAN, [620, 370], [700, 413], [724, 440], [760, 505], [797, 573], [873, 700], [907, 767], [973, 860], [1080, 923], [1150, 940], [1205, 944]],
    [FAN, [600, 345], [700, 377], [793, 440], [870, 520], [978, 700], [1070, 827], [1180, 930], [1300, 997], [1367, 1033], [1467, 1058], [1533, 1066], [1600, 1068]],
    [FAN, [600, 340], [700, 367], [833, 440], [950, 560], [1042, 700], [1080, 763], [1180, 885], [1240, 950], [1300, 985], [1370, 998], [1436, 1002]]
];
var blueWires = [
    [[392, 454], [412, 454]],
    [[544, 470], [536, 520], [538, 575]],
    [[413, 688], [407, 695], [394, 698], [392, 703]],
    [[1470, 850], [1467, 890]]
];
// x, y, side the round end faces
var knobs = [
    [330, 147, 'd'], [459, 210, 'd'], [328, 226, 'u'], [434, 248, 'r'], [464, 248, 'r'], [529, 239, 'r'], [655, 239, 'r'],
    [459, 658, 'u'], [466, 539, 'r'], [698, 539, 'r'], [681, 691, 'l'], [846, 666, 'l'], [716, 980, 'l'], [882, 1002, 'l'],
    [1047, 980, 'l'], [1212, 944, 'l'], [1443, 1002, 'l'], [1608, 1068, 'l'], [408, 824, 'r'], [458, 913, 'u'],
    [577, 760, 'r'], [732, 840, 'r'], [906, 862, 'r'], [1066, 850, 'r'], [1226, 850, 'r'], [1305, 760, 'r']
];
var blueKnobs = [[413, 454, 'd'], [544, 466, 'r'], [413, 682, 'd'], [1471, 842, 'r']];
// x, y, direction
var arrows = [
    [392, 216, 'd'], [473, 261, 'r'], [585, 261, 'r'], [697, 261, 'r'], [1147, 267, 'r'], [478, 335, 'l'], [472, 487, 'r'],
    [704, 567, 'r'], [473, 760, 'r'], [574, 851, 'r'], [739, 862, 'r'], [904, 850, 'r'], [1069, 833, 'r'], [1234, 760, 'r'], [1300, 862, 'r']
];
var blueArrows = [[392, 455, 'd'], [539, 580, 'r'], [392, 710, 'd'], [1466, 896, 'r']];

function smooth(p) {
    var d = 'M' + p[0][0] + ' ' + p[0][1];
    for (var i = 0; i < p.length - 1; i++) {
        var a = p[i - 1] || p[i];
        var b = p[i];
        var c = p[i + 1];
        var e = p[i + 2] || c;
        d += 'C' + (b[0] + (c[0] - a[0]) / 6) + ' ' + (b[1] + (c[1] - a[1]) / 6) + ' ' +
            (c[0] - (e[0] - b[0]) / 6) + ' ' + (c[1] - (e[1] - b[1]) / 6) + ' ' + c[0] + ' ' + c[1];
    }
    return d;
}
function knobPath(k) {
    var r = 7;
    var x = k[0];
    var y = k[1];
    if (k[2] == 'r') return 'M' + (x - r) + ' ' + (y - r) + 'h' + r + 'a' + r + ' ' + r + ' 0 0 1 0 ' + (2 * r) + 'h-' + r + 'z';
    if (k[2] == 'l') return 'M' + (x + r) + ' ' + (y - r) + 'h-' + r + 'a' + r + ' ' + r + ' 0 0 0 0 ' + (2 * r) + 'h' + r + 'z';
    if (k[2] == 'd') return 'M' + (x - r) + ' ' + (y - r) + 'h' + (2 * r) + 'v' + r + 'a' + r + ' ' + r + ' 0 0 1 -' + (2 * r) + ' 0z';
    return 'M' + (x - r) + ' ' + (y + r) + 'h' + (2 * r) + 'v-' + r + 'a' + r + ' ' + r + ' 0 0 0 -' + (2 * r) + ' 0z';
}
function arrowHtml(a, cls) {
    var x = a[0];
    var y = a[1];
    var round = a[2] == 'l' ? 'M' + (x - 6) + ' ' + (y - 7) + 'h6a7 7 0 0 1 0 14h-6z' :
        a[2] == 'r' ? 'M' + (x + 6) + ' ' + (y - 7) + 'h-6a7 7 0 0 0 0 14h6z' :
        'M' + (x - 7) + ' ' + (y + 7) + 'v-10a4 4 0 0 1 4 -4h6a4 4 0 0 1 4 4v10z';
    var tip = a[2] == 'r' ? 'M' + (x - 2) + ' ' + (y - 4) + 'l4 4-4 4' :
        a[2] == 'l' ? 'M' + (x + 2) + ' ' + (y - 4) + 'l-4 4 4 4' :
        'M' + (x - 4) + ' ' + (y - 2) + 'l4 4 4-4';
    return '<path class="knob' + cls + '" d="' + round + '"/><path class="knob-arrow" d="' + tip + '"/>';
}

var svg = '';
wires.forEach(function(w) { svg += '<path class="wire" d="' + smooth(w) + '"/>'; });
blueWires.forEach(function(w) { svg += '<path class="wire blue" d="' + smooth(w) + '"/>'; });
knobs.forEach(function(k) { svg += '<path class="knob" d="' + knobPath(k) + '"/>'; });
blueKnobs.forEach(function(k) { svg += '<path class="knob blue" d="' + knobPath(k) + '"/>'; });
arrows.forEach(function(a) { svg += arrowHtml(a, ''); });
blueArrows.forEach(function(a) { svg += arrowHtml(a, ' blue'); });

canvas.insertAdjacentHTML('beforeend', '<svg class="wires" viewBox="' + OX + ' ' + OY + ' 1340 1006">' + svg + '</svg>');
```
